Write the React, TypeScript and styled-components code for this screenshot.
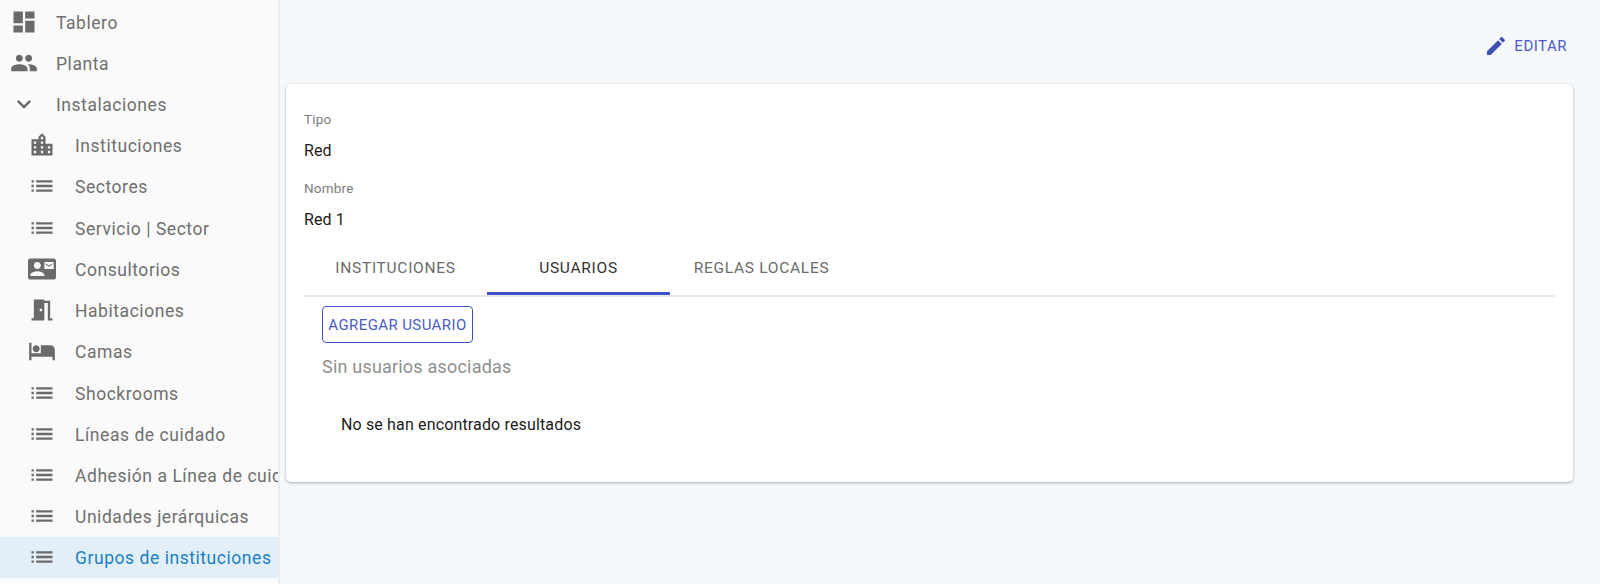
import React from 'react';
import styled, { createGlobalStyle } from 'styled-components';

const GlobalStyle = createGlobalStyle`
  html, body {
    margin: 0;
    padding: 0;
    height: 584px;
    overflow: hidden;
    background: #f6f9fb;
    font-family: Roboto, "Liberation Sans", sans-serif;
  }
`;

const ICONS = {
  dashboard: 'M3 13h8V3H3v10zm0 8h8v-6H3v6zm10 0h8V11h-8v10zm0-18v6h8V3h-8z',
  people:
    'M16 11c1.66 0 2.99-1.34 2.99-3S17.66 5 16 5c-1.66 0-3 1.34-3 3s1.34 3 3 3zm-8 0c1.66 0 2.99-1.34 2.99-3S9.66 5 8 5C6.34 5 5 6.34 5 8s1.34 3 3 3zm0 2c-2.33 0-7 1.17-7 3.5V19h14v-2.5c0-2.33-4.67-3.5-7-3.5zm8 0c-.29 0-.62.02-.97.05 1.16.84 1.97 1.97 1.97 3.45V19h6v-2.5c0-2.33-4.67-3.5-7-3.5z',
  expand: 'M16.59 8.59 12 13.17 7.41 8.59 6 10l6 6 6-6z',
  city: 'M15 11V5l-3-3-3 3v2H3v14h18V11h-6zm-8 8H5v-2h2v2zm0-4H5v-2h2v2zm0-4H5V9h2v2zm6 8h-2v-2h2v2zm0-4h-2v-2h2v2zm0-4h-2V9h2v2zm0-4h-2V5h2v2zm6 12h-2v-2h2v2zm0-4h-2v-2h2v2z',
  list: 'M3 13h2v-2H3v2zm0 4h2v-2H3v2zm0-8h2V7H3v2zm4 4h14v-2H7v2zm0 4h14v-2H7v2zM7 7v2h14V7H7z',
  contact:
    'M21 8V7l-3 2-3-2v1l3 2 3-2zm1-5H2C.9 3 0 3.9 0 5v14c0 1.1.9 2 2 2h20c1.1 0 1.99-.9 1.99-2L24 5c0-1.1-.9-2-2-2zM8 6c1.66 0 3 1.34 3 3s-1.34 3-3 3-3-1.34-3-3 1.34-3 3-3zm6 12H2v-1c0-2 4-3.1 6-3.1s6 1.1 6 3.1v1zm8-6h-8V6h8v6z',
  room: 'M14 6v15H3v-2h2V3h9v1h5v15h2v2h-4V6h-3zm-4 5v2h2v-2h-2z',
  bed: 'M7 13c1.66 0 3-1.34 3-3S8.66 7 7 7s-3 1.34-3 3 1.34 3 3 3zm12-6h-8v7H3V5H1v15h2v-3h18v3h2v-9c0-2.21-1.79-4-4-4z',
  edit: 'M3 17.25V21h3.75L17.81 9.94l-3.75-3.75L3 17.25zM20.71 7.04c.39-.39.39-1.02 0-1.41l-2.34-2.34a.9959.9959 0 0 0-1.41 0l-1.83 1.83 3.75 3.75 1.83-1.83z',
};

type IconName = keyof typeof ICONS;

interface NavEntry {
  label: string;
  icon: IconName;
  nested?: boolean;
  active?: boolean;
}

const NAV_ITEMS: NavEntry[] = [
  { label: 'Tablero', icon: 'dashboard' },
  { label: 'Planta', icon: 'people' },
  { label: 'Instalaciones', icon: 'expand' },
  { label: 'Instituciones', icon: 'city', nested: true },
  { label: 'Sectores', icon: 'list', nested: true },
  { label: 'Servicio | Sector', icon: 'list', nested: true },
  { label: 'Consultorios', icon: 'contact', nested: true },
  { label: 'Habitaciones', icon: 'room', nested: true },
  { label: 'Camas', icon: 'bed', nested: true },
  { label: 'Shockrooms', icon: 'list', nested: true },
  { label: 'Líneas de cuidado', icon: 'list', nested: true },
  { label: 'Adhesión a Línea de cuidado', icon: 'list', nested: true },
  { label: 'Unidades jerárquicas', icon: 'list', nested: true },
  { label: 'Grupos de instituciones', icon: 'list', nested: true, active: true },
];

const TABS = ['INSTITUCIONES', 'USUARIOS', 'REGLAS LOCALES'];

const Layout = styled.div`
  display: flex;
  width: 1600px;
  height: 584px;
  overflow: hidden;
  background: #f6f9fb;
`;

const Sidebar = styled.nav`
  flex: none;
  box-sizing: border-box;
  width: 280px;
  height: 584px;
  padding-top: 1px;
  overflow: hidden;
  background: #fafafa;
  border-right: 2px solid #e9edf0;
`;

const NavRow = styled.div<{ $nested?: boolean; $active?: boolean }>`
  display: flex;
  align-items: center;
  height: 41.23px;
  padding-left: ${(p) => (p.$nested ? '28px' : '10px')};
  white-space: nowrap;
  font-size: 17.5px;
  letter-spacing: 0.55px;
  color: ${(p) => (p.$active ? '#1a7fc4' : '#6f6f6f')};
  background: ${(p) => (p.$active ? '#e3eff8' : 'transparent')};
`;

const NavIcon = styled.svg<{ $nested?: boolean }>`
  flex: none;
  width: 28px;
  height: 28px;
  margin-right: ${(p) => (p.$nested ? '19px' : '18px')};
  fill: #6a6a6a;
`;

const NavLabel = styled.span`
  padding-top: 2px;
`;

const Main = styled.main`
  flex: 1;
  min-width: 0;
  padding: 0 27px 0 6px;
`;

const ActionBar = styled.div`
  display: flex;
  justify-content: flex-end;
  align-items: center;
  box-sizing: border-box;
  height: 84px;
  padding: 8px 6px 0 0;
`;

const EditAction = styled.div`
  display: flex;
  align-items: center;
  gap: 6px;
  font-size: 15px;
  letter-spacing: 0.5px;
  color: #4a5cc4;
`;

const EditIcon = styled.svg`
  width: 24px;
  height: 24px;
  fill: #3f51b5;
`;

const Card = styled.section`
  box-sizing: border-box;
  height: 398px;
  padding: 23px 18px 0;
  background: #ffffff;
  border-radius: 5px;
  box-shadow: 0 1px 3px rgba(0, 0, 0, 0.32);
`;

const Field = styled.div`
  display: flex;
  flex-direction: column;
  height: 69px;
`;

const FieldLabel = styled.div`
  height: 32px;
  line-height: 24px;
  font-size: 13.5px;
  letter-spacing: 0.2px;
  color: #7d7d7d;
`;

const FieldValue = styled.div`
  line-height: 24px;
  font-size: 16px;
  letter-spacing: 0.1px;
  color: #1b1b1b;
`;

const TabBar = styled.div`
  display: flex;
  height: 52px;
  margin-top: -2px;
  border-bottom: 2px solid #e8e8e8;
`;

const Tab = styled.div<{ $active?: boolean }>`
  box-sizing: border-box;
  display: flex;
  align-items: center;
  justify-content: center;
  width: 183px;
  height: 52px;
  padding-top: 1px;
  font-size: 15.5px;
  font-weight: 400;
  letter-spacing: 0.72px;
  color: ${(p) => (p.$active ? '#333333' : '#6b6b6b')};
  border-bottom: 3px solid ${(p) => (p.$active ? '#3f51c4' : 'transparent')};
`;

const TabPanel = styled.div`
  padding: 9px 18px 0;
`;

const OutlineButton = styled.button`
  display: block;
  box-sizing: border-box;
  width: 151px;
  height: 37px;
  padding: 0;
  background: #ffffff;
  border: 1px solid #3f51c4;
  border-radius: 4px;
  font-family: inherit;
  font-size: 15px;
  letter-spacing: 0.4px;
  color: #4a5cc4;
`;

const EmptyHeading = styled.div`
  margin-top: 12px;
  line-height: 24px;
  font-size: 18px;
  letter-spacing: 0.2px;
  color: #8f8f8f;
`;

const EmptyResults = styled.div`
  margin-top: 34px;
  padding-left: 19px;
  line-height: 24px;
  font-size: 16px;
  letter-spacing: 0.15px;
  color: #1b1b1b;
`;

const App: React.FC = () => {
  return (
    <Layout>
      <GlobalStyle />
      <Sidebar>
        {NAV_ITEMS.map((item) => (
          <NavRow key={item.label} $nested={item.nested} $active={item.active}>
            <NavIcon viewBox="0 0 24 24" $nested={item.nested}>
              <path d={ICONS[item.icon]} />
            </NavIcon>
            <NavLabel>{item.label}</NavLabel>
          </NavRow>
        ))}
      </Sidebar>
      <Main>
        <ActionBar>
          <EditAction>
            <EditIcon viewBox="0 0 24 24">
              <path d={ICONS.edit} />
            </EditIcon>
            EDITAR
          </EditAction>
        </ActionBar>
        <Card>
          <Field>
            <FieldLabel>Tipo</FieldLabel>
            <FieldValue>Red</FieldValue>
          </Field>
          <Field>
            <FieldLabel>Nombre</FieldLabel>
            <FieldValue>Red 1</FieldValue>
          </Field>
          <TabBar>
            {TABS.map((tab) => (
              <Tab key={tab} $active={tab === 'USUARIOS'}>
                {tab}
              </Tab>
            ))}
          </TabBar>
          <TabPanel>
            <OutlineButton>AGREGAR USUARIO</OutlineButton>
            <EmptyHeading>Sin usuarios asociadas</EmptyHeading>
            <EmptyResults>No se han encontrado resultados</EmptyResults>
          </TabPanel>
        </Card>
      </Main>
    </Layout>
  );
};

export default App;
